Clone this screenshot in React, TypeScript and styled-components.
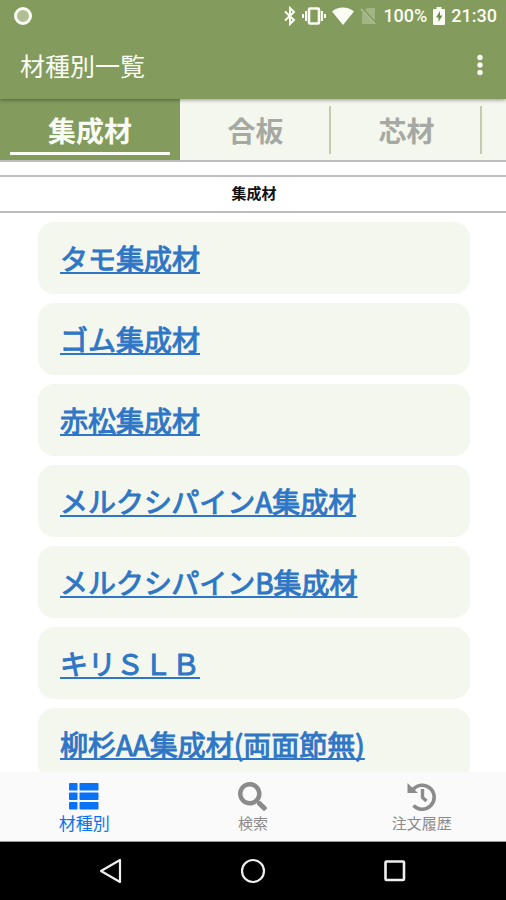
import React from "react";
import styled, { createGlobalStyle } from "styled-components";
import { FaSearch } from "react-icons/fa";

const GlobalStyle = createGlobalStyle`
  *, *::before, *::after { box-sizing: border-box; }
  body { margin: 0; background: #fff; }
  button { font: inherit; border: 0; padding: 0; background: none; cursor: pointer; }
  svg { display: block; flex: none; }
`;

const Screen = styled.div`
  display: flex;
  flex-direction: column;
  height: 100vh;
  overflow: hidden;
  background: #fff;
  font-family: "Noto Sans CJK JP", "Noto Sans", sans-serif;
`;

const TopArea = styled.header`
  position: relative;
  flex: none;
  background: #839b5d;
  color: #fff;
  box-shadow: 0 1px 4px rgba(0, 0, 0, 0.4);
`;

const StatusBar = styled.div`
  display: flex;
  align-items: center;
  justify-content: space-between;
  height: 32px;
  padding: 0 9px 0 13px;
  color: #fbfdf4;
`;

const StatusIcons = styled.div`
  display: flex;
  align-items: center;
  gap: 6px;
`;

const StatusText = styled.span`
  font: 500 18px/24px Roboto, sans-serif;
`;

const AppBar = styled.div`
  display: flex;
  align-items: center;
  justify-content: space-between;
  height: 67px;
  padding: 0 16px 2px 20px;
`;

const AppTitle = styled.h1`
  margin: 0;
  font-size: 25px;
  font-weight: 400;
  line-height: 36px;
  color: #fafdf3;
`;

const MenuButton = styled.button`
  display: grid;
  place-items: center;
  width: 20px;
  height: 36px;
  color: #fafdf3;
`;

const Tabs = styled.nav`
  display: flex;
  flex: none;
  height: 63px;
  overflow: hidden;
  background: #f4f7ee;
  border-bottom: 2px solid #bdbdbb;
`;

const Tab = styled.button<{ $active?: boolean }>`
  display: flex;
  flex: none;
  flex-direction: column;
  align-items: stretch;
  justify-content: space-between;
  width: ${(p) => (p.$active ? 180 : 151)}px;
  padding: ${(p) => (p.$active ? "11px 10px 5px" : "7px 0 7px")};
  background: ${(p) => (p.$active ? "#839b5d" : "transparent")};
  color: ${(p) => (p.$active ? "#f8fcf2" : "#a5a9a2")};
`;

const TabLabel = styled.span<{ $divided?: boolean }>`
  display: block;
  padding: ${(p) => (p.$divided ? "4px 0 4px 2px" : "0")};
  border-right: ${(p) => (p.$divided ? "2px solid #c3ccac" : "0")};
  font-size: 28px;
  font-weight: 700;
  line-height: 40px;
  text-align: center;
`;

const TabMarker = styled.span`
  height: 3px;
  background: #f8fcf2;
`;

const SectionTitle = styled.h2`
  flex: none;
  margin: 13px 0 0;
  border: solid #bdbdbd;
  border-width: 2px 0;
  padding: 0 0 2px 2px;
  font-size: 15px;
  font-weight: 700;
  line-height: 32px;
  text-align: center;
  color: #111;
`;

const List = styled.ul`
  display: flex;
  flex: 1;
  flex-direction: column;
  gap: 9px;
  min-height: 0;
  margin: 0;
  padding: 9px 36px 9px 38px;
  overflow: hidden;
  list-style: none;
`;

const Item = styled.li`
  flex: none;
  padding: 16px 22px;
  border-radius: 16px;
  background: #f4f7ee;
`;

const ItemLink = styled.a`
  display: inline-block;
  font-size: 28px;
  line-height: 40px;
  color: #2f76c6;
  -webkit-text-stroke: 1px #2f76c6;
  text-decoration: underline;
  text-decoration-thickness: 2px;
  text-underline-offset: 2px;
  text-decoration-skip-ink: none;
`;

const BottomTabs = styled.nav`
  display: grid;
  flex: none;
  grid-template-columns: repeat(3, 1fr);
  height: 70px;
  background: #fafafa;
  border-bottom: 1px solid #999;
`;

const BottomTab = styled.button<{ $active?: boolean }>`
  display: flex;
  flex-direction: column;
  align-items: center;
  padding-top: 9px;
  color: ${(p) => (p.$active ? "#0a73f5" : "#8b8b8b")};
  font-size: ${(p) => (p.$active ? 17 : 15)}px;
  line-height: 24px;
`;

const IconSlot = styled.span`
  display: grid;
  place-items: center;
  height: 30px;
`;

const SystemBar = styled.div`
  display: flex;
  flex: none;
  align-items: center;
  justify-content: center;
  gap: 114px;
  height: 58px;
  background: #000;
`;

const SystemButton = styled.button`
  display: grid;
  place-items: center;
  width: 28px;
  height: 28px;
  color: #eee;
`;

const items = [
  "タモ集成材",
  "ゴム集成材",
  "赤松集成材",
  "メルクシパインA集成材",
  "メルクシパインB集成材",
  "キリＳＬＢ",
  "柳杉AA集成材(両面節無)",
];

const RecordIcon = () => (
  <svg width="20" height="20" viewBox="0 0 20 20">
    <circle cx="10" cy="10" r="7.5" fill="#b0bf96" stroke="currentColor" strokeWidth="3" />
  </svg>
);

const BluetoothIcon = () => (
  <svg width="12" height="20" viewBox="0 0 12 20" fill="none" stroke="currentColor" strokeWidth="2">
    <path d="M1 5.5 10 14l-4 4V2l4 4-9 8.5" />
  </svg>
);

const VibrateIcon = () => (
  <svg width="24" height="20" viewBox="0 0 24 20" fill="none" stroke="currentColor">
    <rect x="7" y="2.5" width="10" height="15" rx="1" strokeWidth="2.6" />
    <path d="M4 5v10M20 5v10" strokeWidth="2" />
    <path d="M1 8v4M23 8v4" strokeWidth="2" />
  </svg>
);

const WifiIcon = () => (
  <svg width="22" height="18" viewBox="0 0 22 18">
    <path d="M0 4.5C6-.8 16-.8 22 4.5L11 18z" fill="currentColor" />
  </svg>
);

const NoSimIcon = () => (
  <svg width="17" height="18" viewBox="0 0 17 18">
    <path d="M7 1h8v16H2V6z" fill="#a2b483" />
    <path d="M1 1l15 16" stroke="#839b5d" strokeWidth="3" />
    <path d="M1 2l14 15" stroke="#b5c49b" strokeWidth="1.4" />
  </svg>
);

const BatteryIcon = () => (
  <svg width="12" height="20" viewBox="0 0 12 20">
    <path d="M3.5 1h5v2H11q1 0 1 1v14q0 1-1 1H1q-1 0-1-1V4q0-1 1-1h2.5z" fill="currentColor" />
    <path d="M7 5 3 11.5h2.500V16l4-6.500H7z" fill="#728b4c" />
  </svg>
);

const MoreIcon = () => (
  <svg width="8" height="22" viewBox="0 0 8 22" fill="currentColor">
    <circle cx="4" cy="3.5" r="2.7" />
    <circle cx="4" cy="11" r="2.7" />
    <circle cx="4" cy="18.5" r="2.7" />
  </svg>
);

const ListIcon = () => (
  <svg width="30" height="27" viewBox="0 0 30 27" fill="currentColor">
    {[0, 9.5, 19].map((y) => (
      <g key={y}>
        <rect x="0" y={y} width="8.5" height="7.5" rx="0.8" />
        <rect x="10.5" y={y} width="19" height="7.5" rx="0.8" />
      </g>
    ))}
  </svg>
);

const HistoryIcon = () => (
  <svg width="30" height="30" viewBox="0 0 30 30">
    <path d="M6 8.500A12 12 0 1 1 6.500 24.500" fill="none" stroke="currentColor" strokeWidth="3.600" />
    <path d="M0.500 2 11 12H.5z" fill="currentColor" />
    <path d="M15.500 8v8.500l4 3.500" fill="none" stroke="currentColor" strokeWidth="3.400" />
  </svg>
);

export default function App() {
  return (
    <Screen>
      <GlobalStyle />
      <TopArea>
        <StatusBar>
          <RecordIcon />
          <StatusIcons>
            <BluetoothIcon />
            <VibrateIcon />
            <WifiIcon />
            <NoSimIcon />
            <StatusText>100%</StatusText>
            <BatteryIcon />
            <StatusText>21:30</StatusText>
          </StatusIcons>
        </StatusBar>
        <AppBar>
          <AppTitle>材種別一覧</AppTitle>
          <MenuButton aria-label="メニュー">
            <MoreIcon />
          </MenuButton>
        </AppBar>
      </TopArea>
      <Tabs>
        <Tab $active>
          <TabLabel>集成材</TabLabel>
          <TabMarker />
        </Tab>
        <Tab>
          <TabLabel $divided>合板</TabLabel>
        </Tab>
        <Tab>
          <TabLabel $divided>芯材</TabLabel>
        </Tab>
      </Tabs>
      <SectionTitle>集成材</SectionTitle>
      <List>
        {items.map((name) => (
          <Item key={name}>
            <ItemLink href="#">{name}</ItemLink>
          </Item>
        ))}
      </List>
      <BottomTabs>
        <BottomTab $active>
          <IconSlot>
            <ListIcon />
          </IconSlot>
          材種別
        </BottomTab>
        <BottomTab>
          <IconSlot>
            <FaSearch size={29} />
          </IconSlot>
          検索
        </BottomTab>
        <BottomTab>
          <IconSlot>
            <HistoryIcon />
          </IconSlot>
          注文履歴
        </BottomTab>
      </BottomTabs>
      <SystemBar>
        <SystemButton aria-label="戻る">
          <svg width="24" height="26" viewBox="0 0 24 26" fill="none" stroke="currentColor" strokeWidth="2.2" strokeLinejoin="round">
            <path d="M21 2v22L2 13z" />
          </svg>
        </SystemButton>
        <SystemButton aria-label="ホーム">
          <svg width="26" height="26" viewBox="0 0 26 26" fill="none" stroke="currentColor" strokeWidth="2.2">
            <circle cx="13" cy="13" r="11" />
          </svg>
        </SystemButton>
        <SystemButton aria-label="履歴">
          <svg width="22" height="22" viewBox="0 0 22 22" fill="none" stroke="currentColor" strokeWidth="2.6">
            <rect x="1.5" y="1.5" width="18.5" height="18.5" rx="1" />
          </svg>
        </SystemButton>
      </SystemBar>
    </Screen>
  );
}
